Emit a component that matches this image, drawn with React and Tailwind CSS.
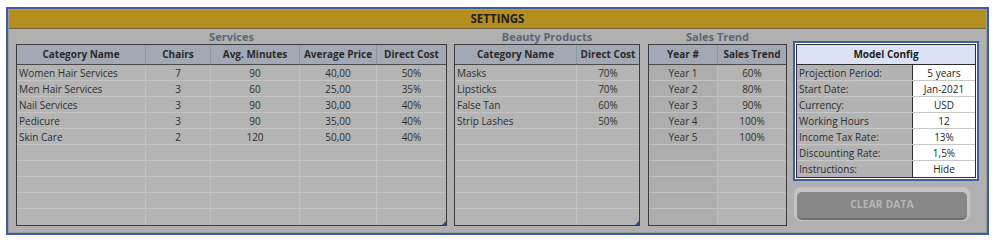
import React from 'react';

const services = [
  ['Women Hair Services', '7', '90', '40,00', '50%'],
  ['Men Hair Services', '3', '60', '25,00', '35%'],
  ['Nail Services', '3', '90', '30,00', '40%'],
  ['Pedicure', '3', '90', '35,00', '40%'],
  ['Skin Care', '2', '120', '50,00', '40%'],
];

const products = [
  ['Masks', '70%'],
  ['Lipsticks', '70%'],
  ['False Tan', '60%'],
  ['Strip Lashes', '50%'],
];

const trend = [
  ['Year 1', '60%'],
  ['Year 2', '80%'],
  ['Year 3', '90%'],
  ['Year 4', '100%'],
  ['Year 5', '100%'],
];

const config = [
  ['Projection Period:', '5 years'],
  ['Start Date:', 'Jan-2021'],
  ['Currency:', 'USD'],
  ['Working Hours', '12'],
  ['Income Tax Rate:', '13%'],
  ['Discounting Rate:', '1,5%'],
  ['Instructions:', 'Hide'],
];

const ROWS = 10;

const SheetTable = ({ title, cols, rows, handle, shadeFirst }) => {
  const filled = [...rows];
  while (filled.length < ROWS) filled.push(cols.map(() => ''));

  return (
    <div className="flex flex-col">
      <div className="h-[14px] text-center text-[11px] leading-[14px] font-bold text-[#5d6678]">{title}</div>
      <div className="relative border border-[#3c3c3c] bg-[#b4b4b4]">
        <div className="flex h-[20px] bg-[#a2a9b5] border-b border-[#4a4a4a]">
          {cols.map((c, i) => (
            <div
              key={i}
              className={`flex items-center justify-center text-[10px] font-bold text-[#2a2a2a] ${i > 0 ? 'border-l border-[#8e96a3]' : ''}`}
              style={{ width: c.w }}
            >
              {c.label}
            </div>
          ))}
        </div>
        {filled.map((r, ri) => (
          <div key={ri} className={`flex h-[16px] ${ri < ROWS - 1 ? 'border-b border-[#c3c3c3]' : ''}`}>
            {r.map((v, ci) => (
              <div
                key={ci}
                className={`flex items-center pt-[1px] text-[10px] text-[#2e2e2e] px-[2px] ${
                  cols[ci].left ? 'justify-start' : 'justify-center'
                } ${ci > 0 ? 'border-l border-[#c0c0c0]' : ''} ${shadeFirst && ci === 0 ? 'bg-[#adadad]' : ''}`}
                style={{ width: cols[ci].w }}
              >
                {v}
              </div>
            ))}
          </div>
        ))}
        {handle && (
          <div className="absolute right-0 bottom-0 w-0 h-0 border-l-[4px] border-l-transparent border-b-[4px] border-b-[#2f4f8f]" />
        )}
      </div>
    </div>
  );
};

export default function App() {
  return (
    <div className="w-[996px] h-[245px] bg-white pt-[7px] pl-[6px] font-['Open_Sans','Noto_Sans',sans-serif]">
      <div className="w-[983px] h-[228px] border-2 border-[#3f5c9c] bg-[#9c9c9c] p-[1px]">
        <div className="h-full bg-[#b0b0b0]">
          <div className="h-[19px] bg-[#b48e1f] border-b border-[#6e6240] flex items-center justify-center text-[11.5px] font-bold text-[#1f1f1f]">
            SETTINGS
          </div>

          <div className="flex pl-[7px] pt-[1px]">
            <div className="w-[431px]">
              <SheetTable
                title="Services"
                handle
                cols={[
                  { label: 'Category Name', w: 128, left: true },
                  { label: 'Chairs', w: 65 },
                  { label: 'Avg. Minutes', w: 89 },
                  { label: 'Average Price', w: 77 },
                  { label: 'Direct Cost', w: 70 },
                ]}
                rows={services}
              />
            </div>

            <div className="w-[186px] ml-[7px]">
              <SheetTable
                title="Beauty Products"
                handle
                cols={[
                  { label: 'Category Name', w: 121, left: true },
                  { label: 'Direct Cost', w: 63 },
                ]}
                rows={products}
              />
            </div>

            <div className="w-[139px] ml-[8px]">
              <SheetTable
                title="Sales Trend"
                shadeFirst
                cols={[
                  { label: 'Year #', w: 68 },
                  { label: 'Sales Trend', w: 69 },
                ]}
                rows={trend}
              />
            </div>

            <div className="w-[186px] ml-[6px] pt-[11px] flex flex-col">
              <div className="border-2 border-[#3f5c9c] bg-white p-[1px]">
                <div className="border border-[#2e2e2e]">
                  <div className="h-[20px] bg-[#dbe2f3] border-b border-[#2e2e2e] flex items-center justify-center text-[10px] font-bold text-[#222]">
                    Model Config
                  </div>
                  {config.map(([k, v], i) => (
                    <div key={i} className={`flex h-[16px] ${i < config.length - 1 ? 'border-b border-[#c8c8c8]' : ''}`}>
                      <div className="w-[115px] bg-[#b3b3b3] flex items-center pt-[1px] px-[2px] text-[10px] text-[#2c2c2c]">{k}</div>
                      <div className="flex-1 bg-white border-l border-[#2e2e2e] flex items-center justify-center pt-[1px] text-[10px] text-[#222]">
                        {v}
                      </div>
                    </div>
                  ))}
                </div>
              </div>

              <div className="mt-[6px] ml-[1px] w-[176px] h-[34px] rounded-[7px] bg-[#c4c4c4] p-[3px]">
                <button className="w-full h-full rounded-[5px] bg-[#878787] border-b-2 border-[#6f6f6f] text-[10px] font-bold tracking-[0.3px] text-[#b7b7b7]">
                  CLEAR DATA
                </button>
              </div>
            </div>
          </div>
        </div>
      </div>
    </div>
  );
}
